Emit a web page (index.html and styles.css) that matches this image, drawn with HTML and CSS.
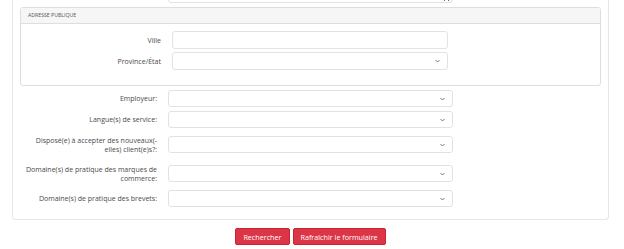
FILE: index.html
```html
<!DOCTYPE html>
<html lang="fr">
<head>
  <meta charset="UTF-8" />
  <title>Recherche</title>
  <link rel="stylesheet" href="styles.css">
</head>
<body>
  <div class="card">
    <div class="top-row">
      <textarea class="notes"></textarea>
    </div>

    <div class="panel">
      <div class="panel-heading">Adresse publique</div>
      <div class="panel-body">
        <div class="prow">
          <label>Ville</label>
          <input type="text" class="field">
        </div>
        <div class="prow">
          <label>Province/État</label>
          <div class="field select">
            <svg width="5" height="4" viewBox="0 0 5 4"><path d="M0.5 1 L2.5 3 L4.5 1" fill="none" stroke="#555" stroke-width="0.8"/></svg>
          </div>
        </div>
      </div>
    </div>

    <div class="row">
      <label>Employeur:</label>
      <div class="field select">
        <svg width="5" height="4" viewBox="0 0 5 4"><path d="M0.5 1 L2.5 3 L4.5 1" fill="none" stroke="#555" stroke-width="0.8"/></svg>
      </div>
    </div>
    <div class="row">
      <label>Langue(s) de service:</label>
      <div class="field select">
        <svg width="5" height="4" viewBox="0 0 5 4"><path d="M0.5 1 L2.5 3 L4.5 1" fill="none" stroke="#555" stroke-width="0.8"/></svg>
      </div>
    </div>
    <div class="row tall">
      <label>Disposé(e) à accepter des nouveaux(-<br>elles) client(e)s?:</label>
      <div class="field select">
        <svg width="5" height="4" viewBox="0 0 5 4"><path d="M0.5 1 L2.5 3 L4.5 1" fill="none" stroke="#555" stroke-width="0.8"/></svg>
      </div>
    </div>
    <div class="row tall">
      <label>Domaine(s) de pratique des marques de<br>commerce:</label>
      <div class="field select">
        <svg width="5" height="4" viewBox="0 0 5 4"><path d="M0.5 1 L2.5 3 L4.5 1" fill="none" stroke="#555" stroke-width="0.8"/></svg>
      </div>
    </div>
    <div class="row">
      <label>Domaine(s) de pratique des brevets:</label>
      <div class="field select">
        <svg width="5" height="4" viewBox="0 0 5 4"><path d="M0.5 1 L2.5 3 L4.5 1" fill="none" stroke="#555" stroke-width="0.8"/></svg>
      </div>
    </div>
  </div>

  <div class="actions">
    <button class="btn">Rechercher</button>
    <button class="btn">Rafraîchir le formulaire</button>
  </div>
</body>
</html>
```

FILE: styles.css
```css
body {
  margin: 0;
  font-family: "Open Sans", sans-serif;
  font-size: 7px;
  color: #4a4a4a;
  background: #ffffff;
}

/* outer form card, scrolled so its top is hidden */
.card {
  box-sizing: border-box;
  width: 597px;
  margin: -37px 0 0 12px;
  padding: 0 7px 12px 7px;
  border: 1px solid #e6e6e6;
  border-top: none;
  border-radius: 0 0 4px 4px;
}

.top-row {
  display: flex;
  padding-left: 148px;
}

.notes {
  box-sizing: border-box;
  display: block;
  width: 285px;
  height: 40px;
  margin: 0;
  border: 1px solid #e2e2e2;
  border-radius: 3px;
}

/* public address panel */
.panel {
  margin-top: 4px;
  border: 1px solid #dedede;
  border-radius: 3px;
}

.panel-heading {
  height: 15px;
  line-height: 15px;
  padding-left: 7px;
  font-size: 5.2px;
  text-transform: uppercase;
  color: #555;
  background: #f6f6f6;
  border-bottom: 1px solid #dedede;
}

.panel-body {
  display: flex;
  flex-direction: column;
  gap: 3px;
  padding: 7px 0 15px 0;
}

.prow {
  display: flex;
  align-items: center;
  gap: 11px;
}

.prow label {
  width: 140px;
  text-align: right;
}

.prow .field {
  width: 276px;
  height: 18px;
}

/* main rows */
.row {
  display: flex;
  align-items: center;
  gap: 11px;
  margin-top: 4px;
}

.row:first-of-type {
  margin-top: 3px;
}

.row label {
  width: 137px;
  text-align: right;
  line-height: 17px;
}

.row.tall label {
  line-height: 9px;
  padding: 3.5px 0;
}

.row .field {
  width: 285px;
  height: 17px;
}

.field {
  box-sizing: border-box;
  margin: 0;
  border: 1px solid #e2e2e2;
  border-radius: 3px;
  background: #fff;
}

.select {
  display: flex;
  align-items: center;
  justify-content: flex-end;
  padding-right: 7px;
}

/* buttons */
.actions {
  display: flex;
  justify-content: center;
  gap: 3px;
  width: 621px;
  margin-top: 8px;
}

.btn {
  height: 17px;
  padding: 0 7px;
  font-family: "Open Sans", sans-serif;
  font-size: 7.2px;
  font-weight: 500;
  color: #fff;
  background: #dc3545;
  border: 1px solid #c82333;
  border-radius: 2px;
}
```
